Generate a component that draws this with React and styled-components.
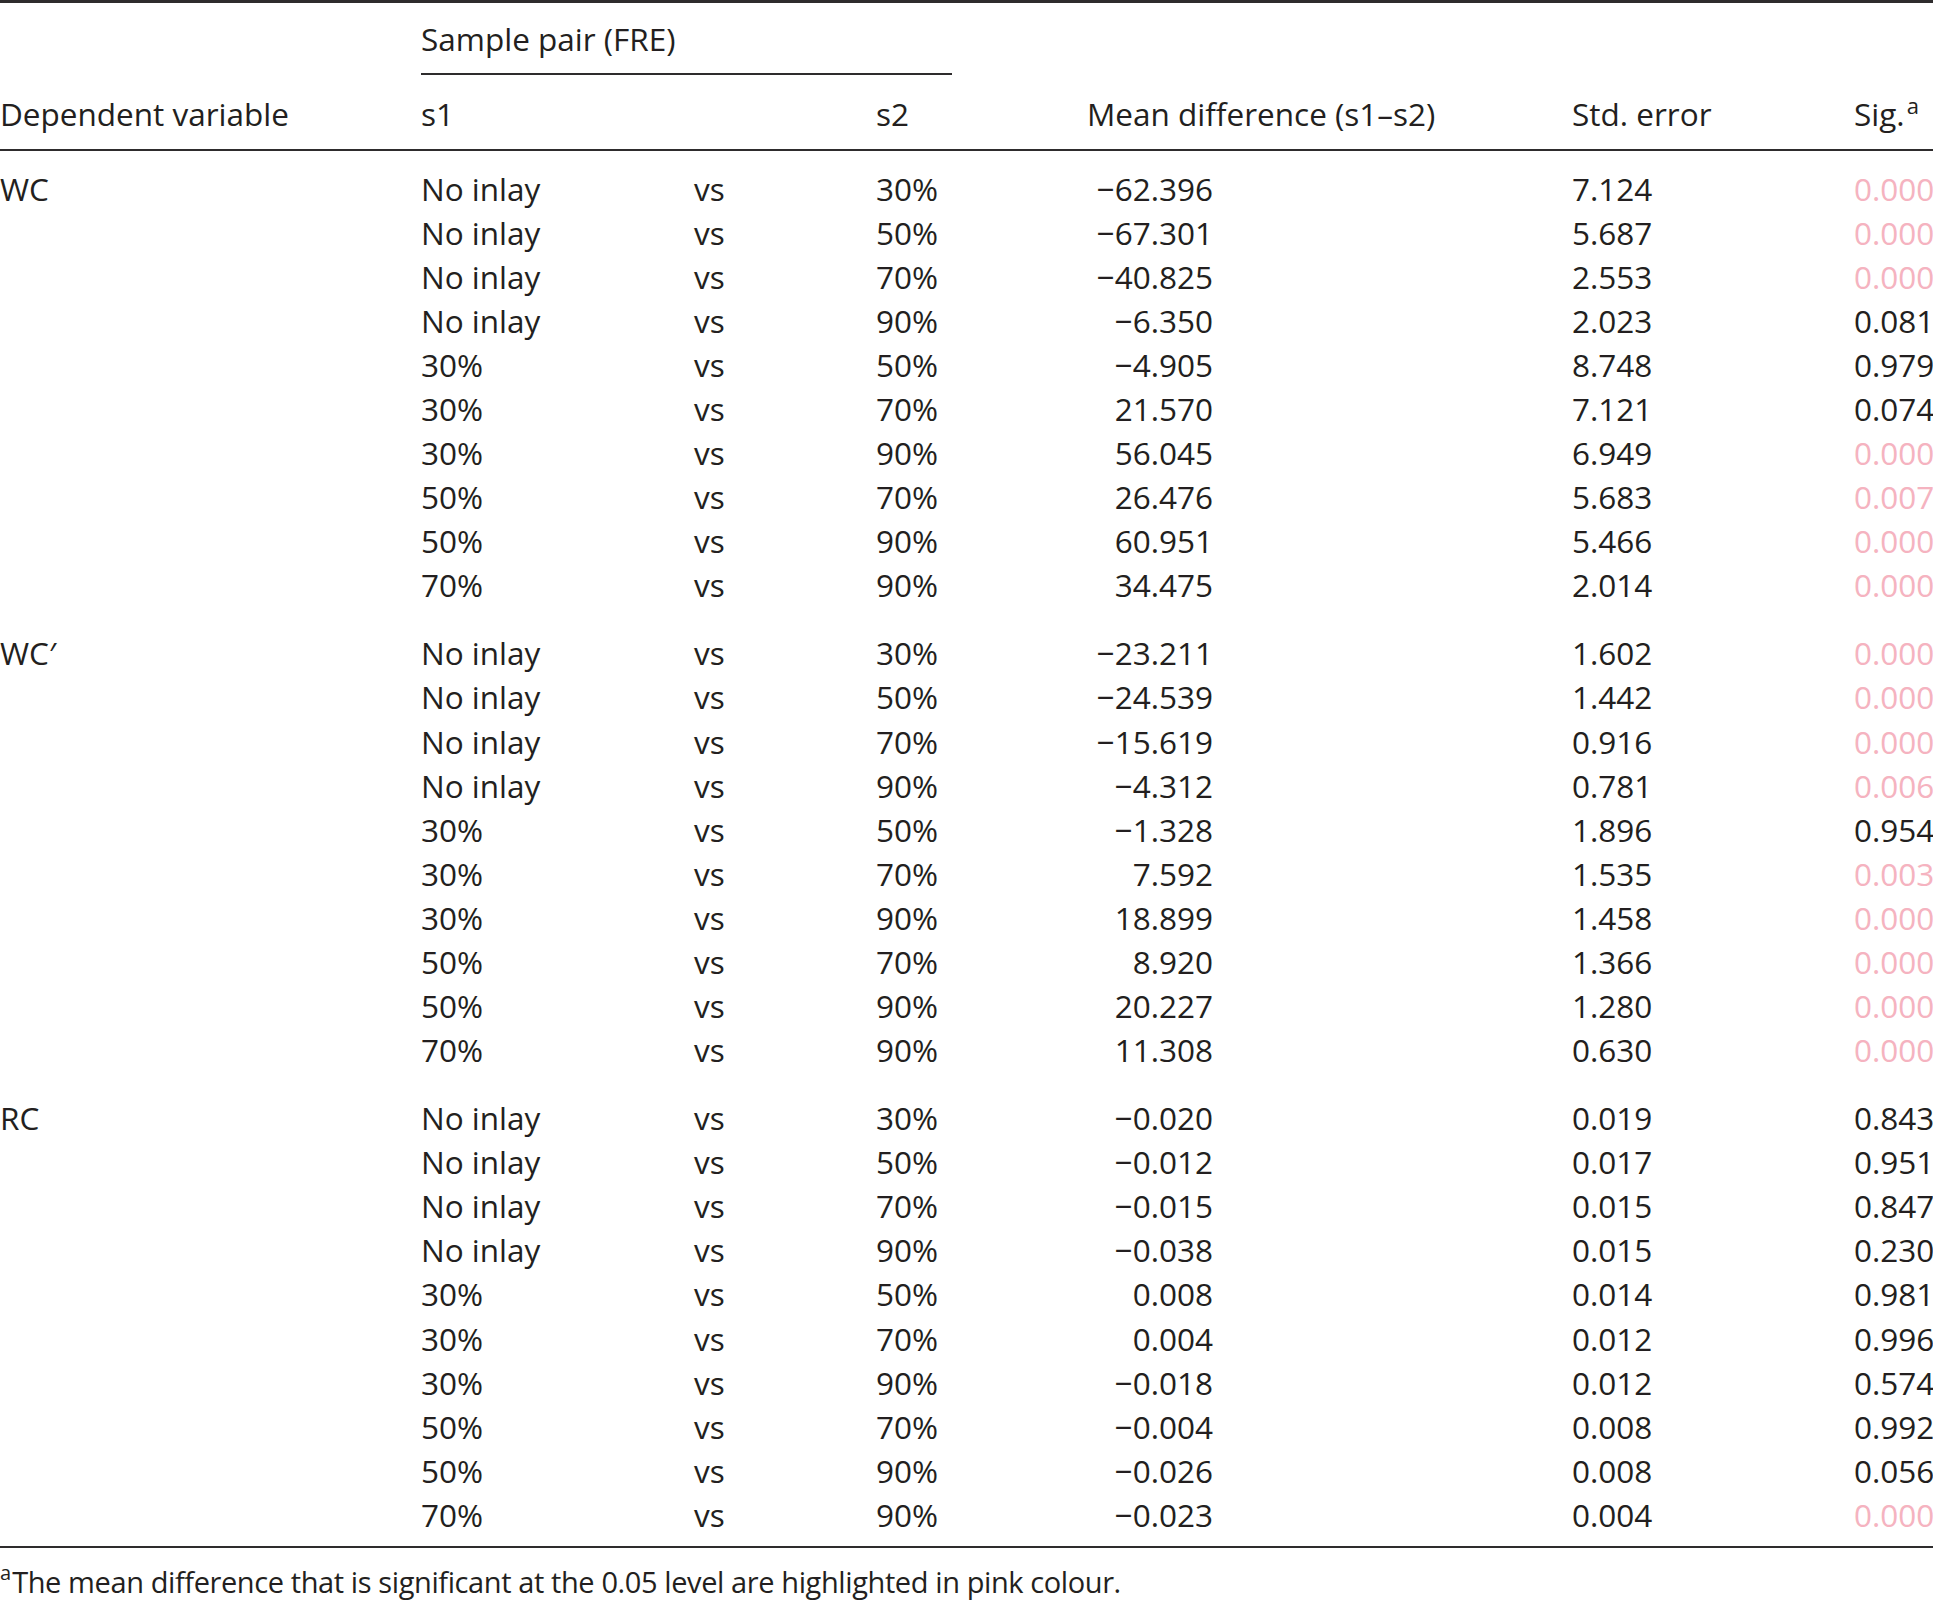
import React from "react";
import styled, { createGlobalStyle } from "styled-components";

const GlobalStyle = createGlobalStyle`
  html, body { margin: 0; padding: 0; overflow: hidden; background: #ffffff; }
  body { font-family: "Open Sans", "Noto Sans", sans-serif; color: #231f20; }
`;

const INK = "#231f20";
const RULE = "#2e2c2d";
const PINK = "#f5b3c0";
const ROW_H = 44.1;

const Page = styled.div`
  width: 1933px;
  background: #ffffff;
`;

const Table = styled.table`
  width: 1933px;
  table-layout: fixed;
  border-collapse: separate;
  border-spacing: 0;
  border-top: 3px solid ${RULE};
  border-bottom: 2px solid ${RULE};
  font-size: 31.5px;
  font-weight: 400;
  color: ${INK};
`;

const HeadCell = styled.th`
  font-weight: 400;
  text-align: left;
  vertical-align: top;
  white-space: nowrap;
  line-height: 42.9px;
  padding: ${(p) => (p.$upper ? "15.3px 0 11.8px" : "18px 0 13px")};
  padding-left: ${(p) => (p.$indent ? "135px" : "0")};
  border-bottom: ${(p) => (p.$rule ? `2px solid ${RULE}` : "0")};
`;

const Cell = styled.td`
  padding: 0;
  padding-top: ${(p) => p.$top || 0}px;
  padding-bottom: ${(p) => p.$bottom || 0}px;
  padding-left: ${(p) => (p.$indent ? "135px" : "0")};
  line-height: ${ROW_H}px;
  vertical-align: top;
  white-space: nowrap;
  text-align: left;
  color: ${(p) => (p.$pink ? PINK : INK)};
`;

const Num = styled.span`
  display: inline-block;
  width: 126px;
  text-align: right;
`;

const Sup = styled.span`
  display: inline-block;
  font-size: ${(p) => p.$size}px;
  line-height: 0;
  vertical-align: ${(p) => p.$raise}px;
  margin-left: ${(p) => p.$gap}px;
  margin-right: ${(p) => p.$after || 0}px;
  letter-spacing: 0;
`;

const Footnote = styled.p`
  margin: 15.5px 0 0;
  font-size: 29px;
  letter-spacing: -0.4px;
  line-height: 36px;
  color: ${INK};
  white-space: nowrap;
`;

const pairs = [
  ["No inlay", "30%"],
  ["No inlay", "50%"],
  ["No inlay", "70%"],
  ["No inlay", "90%"],
  ["30%", "50%"],
  ["30%", "70%"],
  ["30%", "90%"],
  ["50%", "70%"],
  ["50%", "90%"],
  ["70%", "90%"],
];

const groups = [
  {
    label: "WC",
    rows: [
      ["−62.396", "7.124", "0.000"],
      ["−67.301", "5.687", "0.000"],
      ["−40.825", "2.553", "0.000"],
      ["−6.350", "2.023", "0.081"],
      ["−4.905", "8.748", "0.979"],
      ["21.570", "7.121", "0.074"],
      ["56.045", "6.949", "0.000"],
      ["26.476", "5.683", "0.007"],
      ["60.951", "5.466", "0.000"],
      ["34.475", "2.014", "0.000"],
    ],
  },
  {
    label: "WC′",
    rows: [
      ["−23.211", "1.602", "0.000"],
      ["−24.539", "1.442", "0.000"],
      ["−15.619", "0.916", "0.000"],
      ["−4.312", "0.781", "0.006"],
      ["−1.328", "1.896", "0.954"],
      ["7.592", "1.535", "0.003"],
      ["18.899", "1.458", "0.000"],
      ["8.920", "1.366", "0.000"],
      ["20.227", "1.280", "0.000"],
      ["11.308", "0.630", "0.000"],
    ],
  },
  {
    label: "RC",
    rows: [
      ["−0.020", "0.019", "0.843"],
      ["−0.012", "0.017", "0.951"],
      ["−0.015", "0.015", "0.847"],
      ["−0.038", "0.015", "0.230"],
      ["0.008", "0.014", "0.981"],
      ["0.004", "0.012", "0.996"],
      ["−0.018", "0.012", "0.574"],
      ["−0.004", "0.008", "0.992"],
      ["−0.026", "0.008", "0.056"],
      ["−0.023", "0.004", "0.000"],
    ],
  },
];

const colWidths = [421, 273, 182, 76, 620, 282, 79];

export default function App() {
  return (
    <Page>
      <GlobalStyle />
      <Table>
        <colgroup>
          {colWidths.map((w, i) => (
            <col key={i} style={{ width: w }} />
          ))}
        </colgroup>
        <thead>
          <tr>
            <HeadCell $upper />
            <HeadCell $upper $rule colSpan={3}>
              Sample pair (FRE)
            </HeadCell>
            <HeadCell $upper />
            <HeadCell $upper />
            <HeadCell $upper />
          </tr>
          <tr>
            <HeadCell $rule>Dependent variable</HeadCell>
            <HeadCell $rule>s1</HeadCell>
            <HeadCell $rule />
            <HeadCell $rule>s2</HeadCell>
            <HeadCell $rule $indent>
              Mean difference (s1–s2)
            </HeadCell>
            <HeadCell $rule>Std. error</HeadCell>
            <HeadCell $rule>
              Sig.
              <Sup $size={22} $raise={12} $gap={2}>
                a
              </Sup>
            </HeadCell>
          </tr>
        </thead>
        {groups.map((g, gi) => (
          <tbody key={g.label}>
            {g.rows.map(([mean, se, sig], ri) => {
              const top = ri === 0 ? (gi === 0 ? 15.7 : 23.8) : 0;
              const bottom = ri === g.rows.length - 1 && gi === groups.length - 1 ? 9 : 0;
              const [s1, s2] = pairs[ri];
              const pink = parseFloat(sig) < 0.05;
              return (
                <tr key={ri}>
                  <Cell $top={top} $bottom={bottom}>
                    {ri === 0 ? g.label : ""}
                  </Cell>
                  <Cell $top={top} $bottom={bottom}>{s1}</Cell>
                  <Cell $top={top} $bottom={bottom}>vs</Cell>
                  <Cell $top={top} $bottom={bottom}>{s2}</Cell>
                  <Cell $top={top} $bottom={bottom} $indent>
                    <Num>{mean}</Num>
                  </Cell>
                  <Cell $top={top} $bottom={bottom}>{se}</Cell>
                  <Cell $top={top} $bottom={bottom} $pink={pink}>
                    {sig}
                  </Cell>
                </tr>
              );
            })}
          </tbody>
        ))}
      </Table>
      <Footnote>
        <Sup $size={20} $raise={13} $gap={0} $after={1}>
          a
        </Sup>
        The mean difference that is significant at the 0.05 level are highlighted in pink colour.
      </Footnote>
    </Page>
  );
}
